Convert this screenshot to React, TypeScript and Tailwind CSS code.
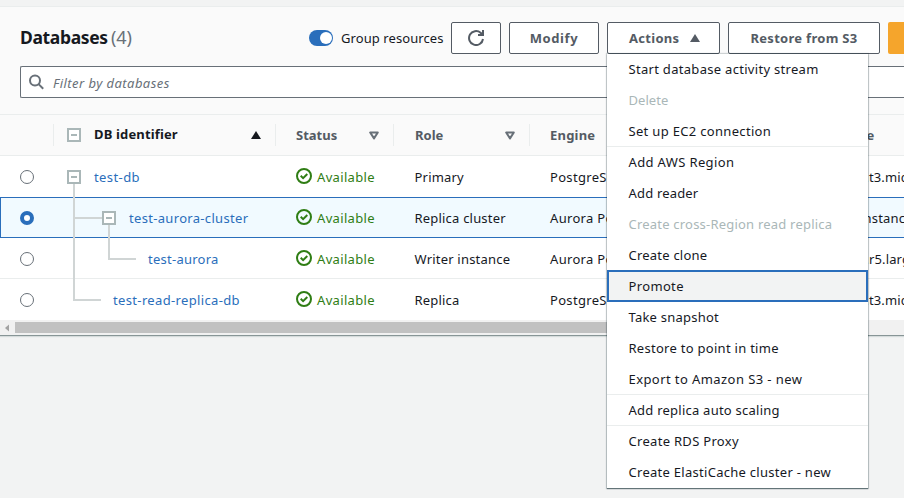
import React from "react";

type Row = {
  name: string;
  nameClass: string;
  role: string;
  engine: string;
  size: string;
  sizeClass: string;
  selected?: boolean;
};

const rows: Row[] = [
  { name: "test-db", nameClass: "pl-[40px] tracking-[0.4px]", role: "Primary", engine: "PostgreSQL", size: "db.t3.micro", sizeClass: "tracking-[0.15px]" },
  { name: "test-aurora-cluster", nameClass: "pl-[75px] tracking-[0.32px]", role: "Replica cluster", engine: "Aurora PostgreSQL", size: "1 instance", sizeClass: "tracking-[0.15px]", selected: true },
  { name: "test-aurora", nameClass: "pl-[94px] tracking-[0.25px]", role: "Writer instance", engine: "Aurora PostgreSQL", size: "db.r5.large", sizeClass: "tracking-[0.15px]" },
  { name: "test-read-replica-db", nameClass: "pl-[59px] tracking-[0.35px]", role: "Replica", engine: "PostgreSQL", size: "db.t3.micro", sizeClass: "tracking-[0.15px]" },
];

type Item = { label: string; track: string; disabled?: boolean; divided?: boolean; active?: boolean };

const items: Item[] = [
  { label: "Start database activity stream", track: "tracking-[0.3px]" },
  { label: "Delete", track: "tracking-[0.05px]", disabled: true },
  { label: "Set up EC2 connection", track: "tracking-[0.32px]" },
  { label: "Add AWS Region", track: "tracking-[0.36px]", divided: true },
  { label: "Add reader", track: "tracking-[0.18px]" },
  { label: "Create cross-Region read replica", track: "tracking-[0.21px]", disabled: true },
  { label: "Create clone", track: "tracking-[0.22px]" },
  { label: "Promote", track: "tracking-[0.35px]", active: true },
  { label: "Take snapshot", track: "tracking-[0.23px]" },
  { label: "Restore to point in time", track: "tracking-[0.28px]" },
  { label: "Export to Amazon S3 - new", track: "tracking-[0.42px]" },
  { label: "Add replica auto scaling", track: "tracking-[0.24px]", divided: true },
  { label: "Create RDS Proxy", track: "tracking-[0.3px]", divided: true },
  { label: "Create ElastiCache cluster - new", track: "tracking-[0.28px]" },
];

function Collapse() {
  return (
    <svg width="14" height="14" viewBox="0 0 14 14" className="block shrink-0" shapeRendering="crispEdges">
      <rect x="1" y="1" width="12" height="12" fill="#fff" stroke="#aab7b8" strokeWidth="2" />
      <path d="M4 7h6" stroke="#aab7b8" strokeWidth="2" />
    </svg>
  );
}

function Check() {
  return (
    <svg width="16" height="16" viewBox="0 0 16 16" className="block shrink-0" fill="none" stroke="#2f7d14">
      <circle cx="8" cy="8" r="7" strokeWidth="2" />
      <path d="M4.7 7.8l2.4 2.3 4.2-4.1" strokeWidth="2" />
    </svg>
  );
}

function SortDown() {
  return (
    <svg width="10" height="9" viewBox="0 0 10 9" className="block" fill="none">
      <path d="M1.2 1.5h7.6L5 7.4z" stroke="#687078" strokeWidth="2" strokeLinejoin="round" />
    </svg>
  );
}

function Button({ className, children }: { className: string; children: React.ReactNode }) {
  return (
    <button className={`flex h-8 shrink-0 items-center rounded-[2px] border border-[#545b64] bg-white font-bold text-[#545b64] ${className}`}>
      {children}
    </button>
  );
}

function TreeLines({ index }: { index: number }) {
  return (
    <svg width="222" height="41" viewBox="0 0 222 41" className="absolute left-0 top-0" fill="none" stroke="#d0d5d5" strokeWidth="2" shapeRendering="crispEdges">
      {index === 0 && <path d="M20 28V41" />}
      {index === 1 && <path d="M20 0V41M20 21H48M55 28V41" />}
      {index === 2 && <path d="M20 0V41M55 0V21H82" />}
      {index === 3 && <path d="M20 0V21H47" />}
    </svg>
  );
}

export default function App() {
  return (
    <div className="relative h-[498px] w-[904px] overflow-hidden bg-[#f2f3f3] pt-[6px] font-['Noto_Sans',sans-serif] text-[13px] leading-[20px] text-[#16191f]">
      <section className="border-t border-[#eaeded] bg-[#fafafa]">
        <header className="flex h-[47px] items-end overflow-hidden pl-5">
          <h1 className="flex w-[289px] shrink-0 items-center self-end pb-[6px] text-[17.5px] font-bold leading-[22px] tracking-[-0.35px]">
            <span className="w-[91px]">Databases</span>
            <span className="text-[18px] font-normal tracking-[-0.1px] text-[#687078]">(4)</span>
          </h1>
          <div className="flex h-8 w-[142px] shrink-0 items-center">
            <span className="flex h-4 w-6 shrink-0 items-center justify-end rounded-full bg-[#2a6ebb] pr-[1px]">
              <span className="h-3 w-3 rounded-full bg-white" />
            </span>
            <span className="ml-2 whitespace-nowrap tracking-[0.08px]">Group resources</span>
          </div>
          <Button className="mr-2 w-[50px] justify-center">
            <svg width="16" height="16" viewBox="0 0 16 16" fill="none" stroke="#545b64" strokeWidth="2">
              <path d="M15 9A7 7 0 1 1 12.6 2.7L15 5" />
              <path d="M15 0V5H10" />
            </svg>
          </Button>
          <Button className="mr-2 w-[90px] justify-center tracking-[0.6px]">Modify</Button>
          <Button className="mr-2 w-[113px] pl-[21px] tracking-[0.3px]">
            Actions
            <svg width="10" height="8" viewBox="0 0 10 8" className="ml-[11px]"><path d="M5 0l5 8H0z" fill="#545b64" /></svg>
          </Button>
          <Button className="mr-2 w-[152px] justify-center whitespace-nowrap tracking-[0.3px]">Restore from S3</Button>
          <div className="h-8 w-10 shrink-0 rounded-[2px] bg-[#f5a52c]" />
        </header>

        <div className="pb-4 pl-5 pt-3">
          <div className="flex h-8 items-center rounded-l-[2px] border border-r-0 border-[#687078] bg-white pl-2">
            <svg width="16" height="16" viewBox="0 0 16 16" fill="none" stroke="#687078" strokeWidth="2">
              <circle cx="6" cy="6.5" r="5" />
              <path d="M9.6 10.1l4.6 4.6" />
            </svg>
            <span className="ml-[8px] mt-[2px] italic tracking-[0.45px] text-[#687078]">Filter by databases</span>
          </div>
        </div>

        <div className="flex h-[42px] items-center border-y border-[#eaeded] font-bold text-[#545b64]">
          <div className="h-[22px] w-[54px] shrink-0 border-r border-[#eaeded]" />
          <div className="flex h-[22px] w-[222px] shrink-0 items-center border-r border-[#eaeded] pl-[13px] text-[#16191f]">
            <Collapse />
            <span className="-mt-[2px] ml-[13px] tracking-[0.15px]">DB identifier</span>
            <svg width="10" height="8" viewBox="0 0 10 8" className="ml-auto mr-[14px]"><path d="M5 0l5 8H0z" fill="#16191f" /></svg>
          </div>
          <div className="flex h-[22px] w-[118px] shrink-0 items-center justify-between border-r border-[#eaeded] pl-5 pr-[14px]">
            Status <SortDown />
          </div>
          <div className="flex h-[22px] w-[136px] shrink-0 items-center justify-between border-r border-[#eaeded] pl-[21px] pr-[14px]">
            Role <SortDown />
          </div>
          <div className="w-[319px] shrink-0 pl-5 tracking-[0.2px]">Engine</div>
          <div>Size</div>
        </div>

        <div className="h-[164px] bg-white">
          {rows.map((r, i) => (
            <div
              key={r.name}
              className={`flex h-[41px] items-center border-b ${r.selected ? "bg-[#f1faff] border-[#2a6ebb] shadow-[inset_1px_1px_0_#2a6ebb]" : i === 2 ? "border-[#eaeded]" : "border-transparent"}`}
            >
              <div className="mt-[2px] w-[54px] shrink-0 pl-5">
                <div className={`h-[14px] w-[14px] rounded-full bg-white ${r.selected ? "border-[4px] border-[#2a6ebb]" : "border border-[#687078]"}`} />
              </div>
              <div className={`relative flex h-[41px] w-[222px] shrink-0 items-center self-start whitespace-nowrap text-[#2a6ebb] ${r.nameClass}`}>
                <TreeLines index={i} />
                {i < 2 && <span className="relative -ml-[27px] mr-[13px]"><Collapse /></span>}
                <span>{r.name}</span>
              </div>
              <div className="flex w-[118px] shrink-0 items-center gap-[5px] pl-5 text-[#2f7d14]">
                <Check />
                <span className="mt-[2px] tracking-[0.33px]">Available</span>
              </div>
              <div className="mt-[2px] w-[136px] shrink-0 pl-[20.5px] tracking-[0.2px]">{r.role}</div>
              <div className="mt-[2px] w-[319px] shrink-0 pl-5 tracking-[0.32px]">{r.engine}</div>
              <div className={`mt-[2px] whitespace-nowrap ${r.sizeClass}`}>{r.size}</div>
            </div>
          ))}
        </div>

        <div className="flex h-[16px] items-center border-b border-[#879596] bg-[#f1f1f1] shadow-[0_1px_1px_#d5dbdb]">
          <svg width="15" height="14" viewBox="0 0 15 14"><path d="M9 3.5v7L5 7z" fill="#a3a3a3" /></svg>
          <div className="h-[11px] w-[700px] bg-[#c1c1c1]" />
        </div>
      </section>

      <div className="absolute left-[607px] top-[54px] h-[434px] w-[261px] bg-white shadow-[0_1px_1px_rgba(0,28,36,0.5),0_0_1px_1px_rgba(0,28,36,0.18)]">
        <ul className="-mt-px">
          {items.map((it) => (
            <li
              key={it.label}
              className={`flex items-center whitespace-nowrap ${it.active ? "relative -mb-px h-[32px] border-2 border-[#2a6ebb] bg-[#f2f3f3] pl-[19.5px]" : it.divided ? "h-[31px] border-t border-[#eaeded] pl-[21.5px]" : "h-[31px] pl-[21.5px] pt-px"} ${it.disabled ? "text-[#aab7b8]" : ""} ${it.track}`}
            >
              {it.label}
            </li>
          ))}
        </ul>
      </div>
    </div>
  );
}
